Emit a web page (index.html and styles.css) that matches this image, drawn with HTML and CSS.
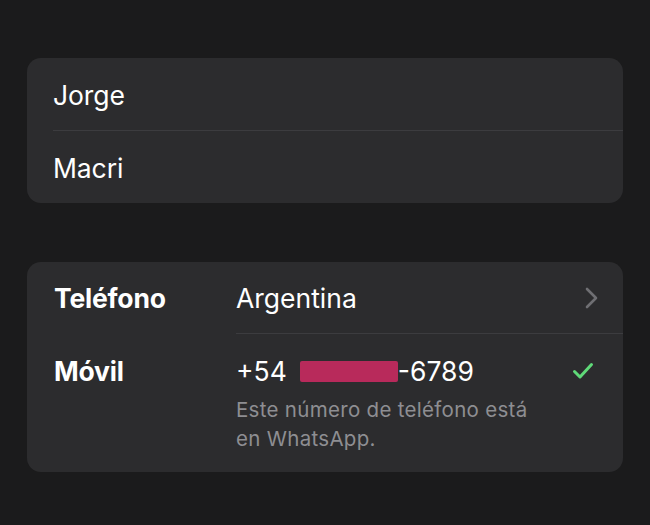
FILE: index.html
```html
<!DOCTYPE html>
<html lang="es">
<head>
<meta charset="utf-8">
<link rel="stylesheet" href="styles.css">
</head>
<body>
<div class="page">
  <section class="card">
    <div class="row name-row"><span class="name">Jorge</span></div>
    <div class="row name-row sep"><span class="name">Macri</span></div>
  </section>
  <section class="card phone-card">
    <div class="field">
      <div class="label">Teléfono</div>
      <div class="value-wrap">
        <div class="value-line">
          <span class="value">Argentina</span>
          <svg class="chev" width="14" height="22" viewBox="0 0 14 22"><path d="M2 2 L11 11 L2 20" fill="none" stroke="#6f6f73" stroke-width="2.6" stroke-linecap="round" stroke-linejoin="round"/></svg>
        </div>
      </div>
    </div>
    <div class="field">
      <div class="label second">Móvil</div>
      <div class="value-wrap sep">
        <div class="value-line">
          <span class="value">+54<span class="redact"></span>-6789</span>
          <svg class="check" width="22" height="18" viewBox="0 0 22 18"><path d="M2.5 9.5 L8 15 L19.5 2.5" fill="none" stroke="#5fd978" stroke-width="3" stroke-linecap="round" stroke-linejoin="round"/></svg>
        </div>
        <p class="note">Este número de teléfono está<br>en WhatsApp.</p>
      </div>
    </div>
  </section>
</div>
</body>
</html>
```

FILE: styles.css
```css
* { box-sizing: border-box; }
html, body { margin: 0; padding: 0; }
body {
  background: #1b1b1c;
  font-family: Inter, "Noto Sans", sans-serif;
  color: #ffffff;
  width: 650px;
  height: 525px;
  overflow: hidden;
}
.page {
  padding: 58px 27px 0 27px;
  display: flex;
  flex-direction: column;
  gap: 59px;
}
.card {
  background: #2c2c2e;
  border-radius: 14px;
  overflow: hidden;
}
.row {
  height: 72px;
  margin-left: 26px;
  display: flex;
  align-items: center;
}
.row.sep { border-top: 1px solid #3c3c3f; height: 73px; }
.name {
  font-size: 26.5px;
  letter-spacing: -0.1px;
  padding-top: 1px;
}
.phone-card { padding-bottom: 19px; }
.field {
  display: flex;
  padding-left: 27px;
}
.label {
  width: 182px;
  flex-shrink: 0;
  font-size: 26.5px;
  font-weight: 700;
  letter-spacing: -0.2px;
  padding-top: 21px;
  line-height: 30px;
}
.label.second { padding-top: 23px; }
.value-wrap {
  flex: 1;
  padding-top: 21px;
  padding-bottom: 20px;
}
.value-wrap.sep {
  border-top: 1px solid #3c3c3f;
  padding-top: 22px;
  padding-bottom: 0;
}
.value-line {
  display: flex;
  align-items: center;
  justify-content: space-between;
  padding-right: 27px;
  height: 30px;
}
.value {
  font-size: 26.5px;
  line-height: 30px;
  letter-spacing: 0;
  display: flex;
  align-items: center;
  white-space: pre;
}
.redact {
  display: inline-block;
  width: 98px;
  height: 21px;
  background: #b82a5b;
  border-radius: 2px;
  margin-left: 13px;
}
.chev { margin-right: -3px; }
.check { margin-right: 2px; }
.note {
  margin: 9px 0 0 0;
  font-size: 20.5px;
  line-height: 29px;
  color: #8e8e92;
  letter-spacing: 0.3px;
}
```
